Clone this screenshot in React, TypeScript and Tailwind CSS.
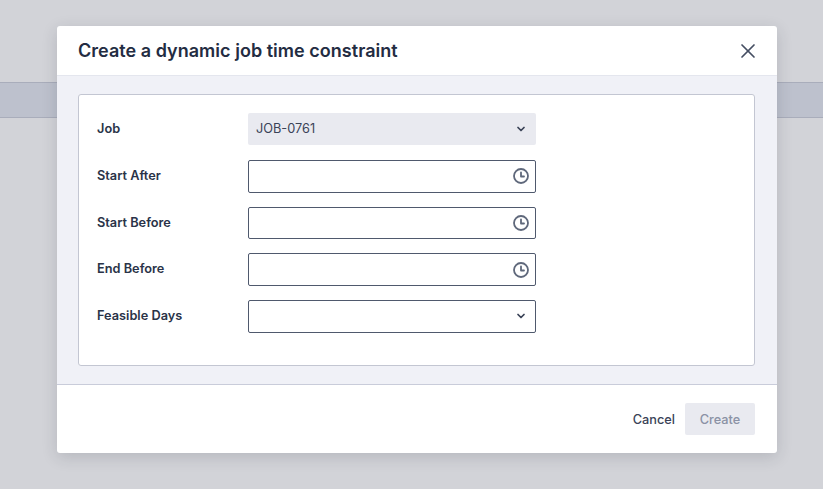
import { ChevronDown, X } from "lucide-react";

function ClockIcon() {
  return (
    <svg width="16" height="16" viewBox="0 0 16 16" fill="none" stroke="#5f687b" strokeWidth="1.8" strokeLinecap="round" strokeLinejoin="round">
      <circle cx="8" cy="8" r="7" />
      <path d="M8 4.5V8.5H11" />
    </svg>
  );
}

function Field({ label, children }: { label: string; children: React.ReactNode }) {
  return (
    <div className="flex items-start h-[32.75px]">
      <label className="w-[151px] pt-[6.1px] text-[12.75px] leading-[20px] font-semibold text-[#2a3348]">{label}</label>
      {children}
    </div>
  );
}

function TimeInput() {
  return (
    <div className="flex items-center justify-end w-[288px] h-[32.75px] rounded-[2px] border border-[#4f596d] bg-white pr-[6px]">
      <ClockIcon />
    </div>
  );
}

export default function App() {
  return (
    <div className="relative h-[489px] w-[823px] overflow-hidden bg-[#d2d3d8] font-['Inter',sans-serif]">
      <div className="mt-[82px] h-[36px] border-y border-[#a9adbb] bg-[#bdc1cd]" />

      <div className="absolute left-[57px] top-[26px] flex h-[427px] w-[720px] flex-col overflow-hidden rounded-[3px] bg-white shadow-[0_4px_16px_rgba(30,35,50,0.16)]">
        <div className="flex h-[50px] shrink-0 items-center justify-between border-b border-[#e4e6ee] pl-[21px] pr-[17px]">
          <h2 className="text-[18px] font-semibold leading-[24px] tracking-[0.03px] text-[#232c42]">Create a dynamic job time constraint</h2>
          <X size={24} strokeWidth={1.7} color="#454e62" />
        </div>

        <div className="flex-1 border-b border-[#c9ccda] bg-[#f0f1f7] pl-[21px] pr-[22px] pt-[18px]">
          <div className="flex h-[272px] flex-col gap-[14px] rounded-[3px] border border-[#c3c6d2] bg-white pl-[18px] pt-[18px]">
            <Field label="Job">
              <div className="flex h-[32px] w-[288px] items-center justify-between rounded-[2px] bg-[#e9eaf0] pl-[8px] pr-[9px] text-[12.75px] text-[#3a4357]">
                <span>JOB-0761</span>
                <ChevronDown size={12} strokeWidth={3.5} color="#3a4357" />
              </div>
            </Field>
            <Field label="Start After"><TimeInput /></Field>
            <Field label="Start Before"><TimeInput /></Field>
            <Field label="End Before"><TimeInput /></Field>
            <Field label="Feasible Days">
              <div className="flex h-[32.75px] w-[288px] items-center justify-end rounded-[2px] border border-[#4f596d] bg-white pr-[8px]">
                <ChevronDown size={12} strokeWidth={3.5} color="#3a4357" />
              </div>
            </Field>
          </div>
        </div>

        <div className="flex h-[68px] shrink-0 items-center justify-end gap-[10px] pr-[22px]">
          <button className="pt-[1px] text-[12.75px] font-medium text-[#3a4357]">Cancel</button>
          <button className="h-[32px] w-[70px] rounded-[2px] bg-[#e9eaf0] pt-[1px] text-[12.75px] font-medium text-[#8b92a5]">Create</button>
        </div>
      </div>
    </div>
  );
}
